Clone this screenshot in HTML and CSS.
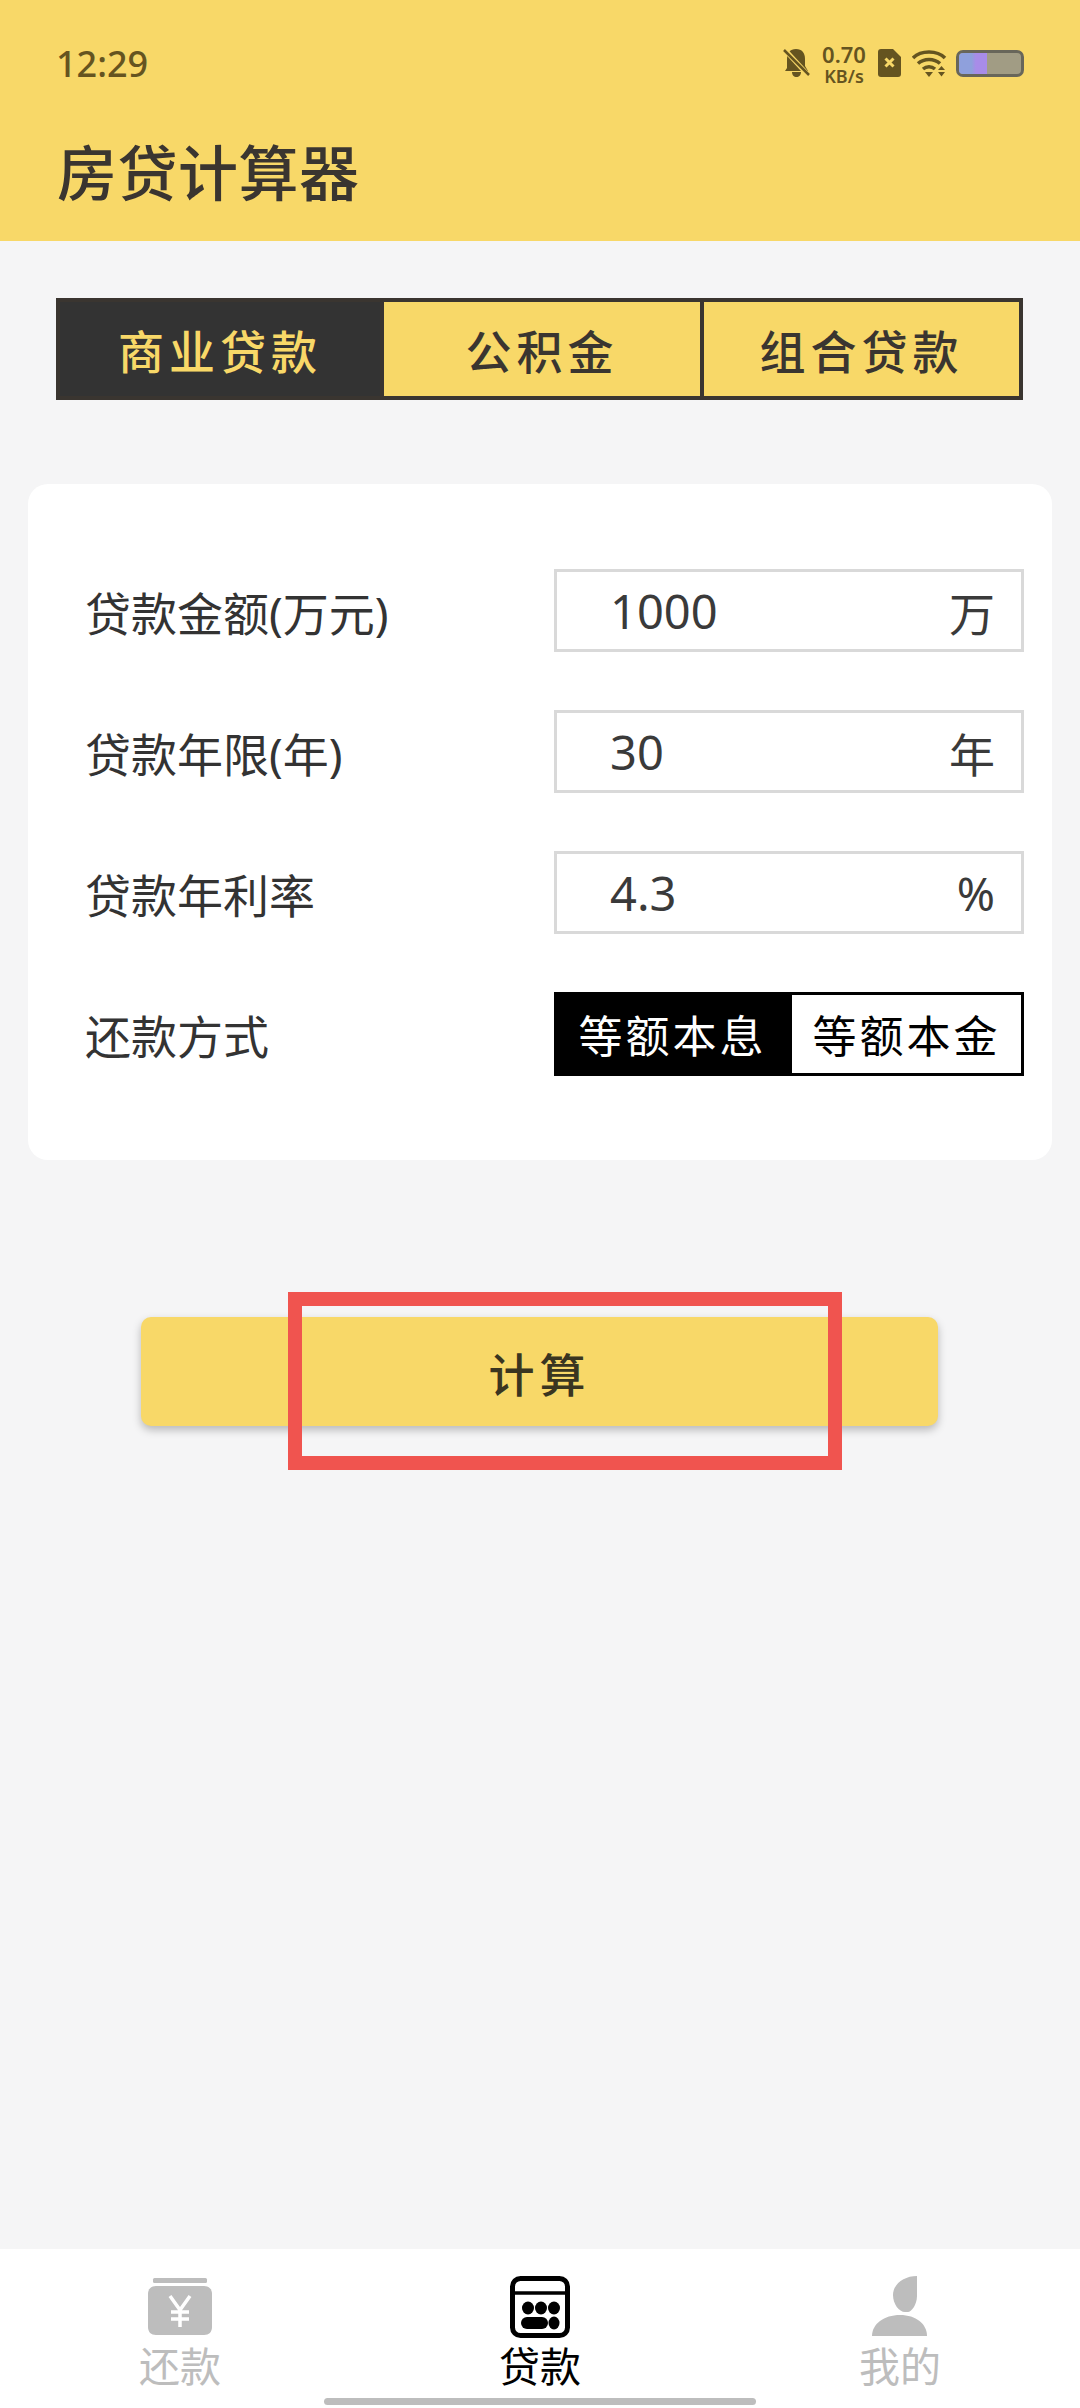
FILE: index.html
```html
<!DOCTYPE html>
<html lang="zh-CN">
<head>
    <meta charset="UTF-8">
    <meta name="viewport" content="width=device-width, initial-scale=1.0">
    <title>房贷计算器</title>
    <link rel="stylesheet" href="styles.css">
</head>
<body>
    <header class="app-header">
        <div class="status-bar">
            <span class="status-time">12:29</span>
            <div class="status-icons">
                <svg class="icon-bell" width="27" height="28" viewBox="0 0 27 28">
                    <path d="M13 0c6 0 9 4 9 10v7l3 5H2l2-3V10C4 4 7 0 13 0zM9 23h9c0 3-2 5-4.500 5S9 26 9 23z" fill="#655420"/>
                    <path d="M1 0l25 27" stroke="#f8d868" stroke-width="5"/>
                    <path d="M1 1l25 25" stroke="#655420" stroke-width="2.500"/>
                </svg>
                <div class="net-speed"><span class="net-value">0.70</span><span class="net-unit">KB/s</span></div>
                <svg class="icon-sim" width="23" height="28" viewBox="0 0 23 28">
                    <path d="M3 0h12l8 8v17a3 3 0 0 1-3 3H3a3 3 0 0 1-3-3V3a3 3 0 0 1 3-3z" fill="#655420"/>
                    <path d="M7.500 9.500l8 8M15.500 9.500l-8 8" stroke="#f8d868" stroke-width="3"/>
                </svg>
                <svg class="icon-wifi" width="35" height="28" viewBox="0 0 35 28">
                    <path d="M1 9c8-8 24-8 32 0" fill="none" stroke="#655420" stroke-width="3.500"/>
                    <path d="M6 14.500c6-5.500 16-5.500 22 0" fill="none" stroke="#655420" stroke-width="3.500"/>
                    <path d="M11 20c3.500-3 8.500-3 12 0" fill="none" stroke="#655420" stroke-width="3.500"/>
                    <path d="M13 23h8l-4 5z" fill="#655420"/>
                    <path d="M26 21l3.500-4 3.500 4zM26 23h7l-3.500 4.500z" fill="#655420"/>
                </svg>
                <div class="battery"><div class="battery-level"></div></div>
            </div>
        </div>
        <h1 class="app-title">房贷计算器</h1>
    </header>

    <main class="content">
        <div class="loan-tabs">
            <div class="loan-tab active">商业贷款</div>
            <div class="loan-tab">公积金</div>
            <div class="loan-tab">组合贷款</div>
        </div>

        <section class="form-card">
            <div class="form-row">
                <span class="form-label">贷款金额(万元)</span>
                <div class="form-input"><span class="input-value">1000</span><span class="input-unit">万</span></div>
            </div>
            <div class="form-row">
                <span class="form-label">贷款年限(年)</span>
                <div class="form-input"><span class="input-value">30</span><span class="input-unit">年</span></div>
            </div>
            <div class="form-row">
                <span class="form-label">贷款年利率</span>
                <div class="form-input"><span class="input-value">4.3</span><span class="input-unit">%</span></div>
            </div>
            <div class="form-row">
                <span class="form-label">还款方式</span>
                <div class="repay-toggle">
                    <div class="repay-option active">等额本息</div>
                    <div class="repay-option">等额本金</div>
                </div>
            </div>
        </section>

        <div class="calc-wrap">
            <button class="calc-button">计算</button>
            <div class="highlight-box"></div>
        </div>
    </main>

    <nav class="tab-bar">
        <div class="tab-item">
            <svg width="64" height="62" viewBox="0 0 64 62">
                <rect x="5" y="2" width="54" height="5" rx="1.500" fill="#bdbdbd"/>
                <path d="M8 10h48c5 0 8 3 8 8v33c0 5-3 8-8 8H8c-5 0-8-3-8-8V18c0-5 3-8 8-8z" fill="#bdbdbd"/>
                <path d="M22 20l10 14 10-14M32 34v17M23 36h18M23 43h18" fill="none" stroke="#fff" stroke-width="3.500"/>
            </svg>
            <span class="tab-label">还款</span>
        </div>
        <div class="tab-item current">
            <svg width="60" height="62" viewBox="0 0 60 62">
                <rect x="2.500" y="2.500" width="55" height="57" rx="8" fill="none" stroke="#000" stroke-width="5"/>
                <path d="M3 17h54" stroke="#000" stroke-width="3.500"/>
                <ellipse cx="18" cy="32" rx="6" ry="6.500"/>
                <ellipse cx="31" cy="32" rx="6" ry="6.500"/>
                <ellipse cx="44" cy="32" rx="6" ry="6.500"/>
                <rect x="11" y="41" width="27" height="12" rx="6"/>
                <ellipse cx="44" cy="47" rx="5.500" ry="6.500"/>
            </svg>
            <span class="tab-label">贷款</span>
        </div>
        <div class="tab-item">
            <svg width="56" height="62" viewBox="0 0 56 62">
                <path d="M45 0v20c0 9-6 16-9 16h-3c-6 0-12-8-12-17C21 8 32 0 45 0z" fill="#bdbdbd"/>
                <path d="M0 60c0-12 12-21 28-21s27 9 27 21z" fill="#bdbdbd"/>
            </svg>
            <span class="tab-label">我的</span>
        </div>
        <div class="home-bar"></div>
    </nav>
</body>
</html>
```

FILE: styles.css
```css
* {
    box-sizing: border-box;
}
body {
    font-family: "Noto Sans", "Noto Sans CJK SC", sans-serif;
    background-color: #f5f5f6;
    color: #333;
    margin: 0;
    padding: 0;
    height: 2408px;
    display: flex;
    flex-direction: column;
    overflow: hidden;
}
.app-header {
    background-color: #f8d868;
    height: 241px;
    flex-shrink: 0;
}
.status-bar {
    height: 126px;
    padding: 0 56px;
    display: flex;
    align-items: center;
    justify-content: space-between;
}
.status-time {
    font-size: 36px;
    font-weight: 500;
    color: #655420;
}
.status-icons {
    display: flex;
    align-items: center;
}
.icon-sim {
    margin-left: 12px;
}
.icon-wifi {
    margin-left: 11px;
}
.net-speed {
    display: flex;
    flex-direction: column;
    align-items: center;
    width: 44px;
    margin: 2px 0 0 12px;
    color: #655420;
    font-weight: 600;
}
.net-value {
    font-size: 22px;
    line-height: 24px;
}
.net-unit {
    font-size: 18px;
    line-height: 20px;
}
.battery {
    width: 68px;
    height: 27px;
    margin-left: 9px;
    border: 3px solid #68665a;
    border-radius: 7px;
    background-color: #a19c84;
    overflow: hidden;
}
.battery-level {
    width: 28px;
    height: 100%;
    background: linear-gradient(90deg, #8fa0dc 0%, #8fa0dc 45%, #a88ce8 60%, #a88ce8 100%);
}
.app-title {
    margin: 0;
    padding-left: 57px;
    font-size: 60px;
    font-weight: 500;
    line-height: 94px;
    letter-spacing: 0.500px;
    color: #3a3530;
}
.content {
    flex: 1;
    display: flex;
    flex-direction: column;
}
.loan-tabs {
    display: grid;
    grid-template-columns: 320px 320px 1fr;
    width: 967px;
    height: 102px;
    margin: 57px 0 0 56px;
    border: 4px solid #3a3530;
    background-color: #f8d868;
}
.loan-tab {
    display: flex;
    align-items: center;
    justify-content: center;
    font-size: 46px;
    font-weight: 500;
    letter-spacing: 5px;
    color: #3a3530;
    border-left: 4px solid #3a3530;
}
.loan-tab:first-child {
    border-left: none;
}
.loan-tab.active {
    background-color: #333;
    color: #f8d868;
}
.form-card {
    width: 1024px;
    margin: 84px 0 0 28px;
    padding: 85px 28px 85px 57px;
    background-color: #fff;
    border-radius: 20px;
    display: flex;
    flex-direction: column;
    gap: 58px;
}
.form-row {
    display: flex;
    align-items: center;
    justify-content: space-between;
    height: 83px;
}
.form-label {
    font-size: 46px;
    color: #333;
}
.form-input {
    width: 470px;
    height: 83px;
    padding: 0 26px 0 53px;
    border: 3px solid #d9d9d9;
    display: flex;
    align-items: center;
    justify-content: space-between;
}
.input-value {
    font-size: 47px;
    color: #3a3a3a;
}
.input-unit {
    font-size: 46px;
    color: #3a3a3a;
}
.repay-toggle {
    width: 470px;
    height: 84px;
    border: 3px solid #000;
    display: flex;
}
.repay-option {
    flex: 1;
    display: flex;
    align-items: center;
    justify-content: center;
    font-size: 44px;
    letter-spacing: 3px;
    color: #000;
}
.repay-option.active {
    width: 235px;
    flex: none;
    padding-right: 4px;
    background-color: #000;
    color: #fff;
}
.calc-wrap {
    position: relative;
    width: 797px;
    margin: 157px 0 0 141px;
}
.calc-button {
    display: block;
    width: 100%;
    height: 109px;
    border: none;
    border-radius: 10px;
    background-color: #f8d868;
    box-shadow: 0px 4px 8px rgba(0, 0, 0, 0.25);
    font-family: inherit;
    font-size: 46px;
    font-weight: 500;
    letter-spacing: 5px;
    color: #3a3520;
}
.highlight-box {
    position: absolute;
    left: 147px;
    top: -25px;
    width: 554px;
    height: 178px;
    border: 14px solid #f0544f;
}
.tab-bar {
    position: relative;
    height: 159px;
    flex-shrink: 0;
    background-color: #fff;
    display: flex;
    padding-top: 27px;
}
.tab-item {
    flex: 1;
    display: flex;
    flex-direction: column;
    align-items: center;
}
.tab-label {
    margin-top: 3px;
    font-size: 41px;
    line-height: 50px;
    color: #bdbdbd;
}
.tab-item.current .tab-label {
    color: #000;
}
.home-bar {
    position: absolute;
    left: 324px;
    bottom: 3px;
    width: 432px;
    height: 7px;
    border-radius: 4px;
    background-color: #bdbdbd;
}
```
